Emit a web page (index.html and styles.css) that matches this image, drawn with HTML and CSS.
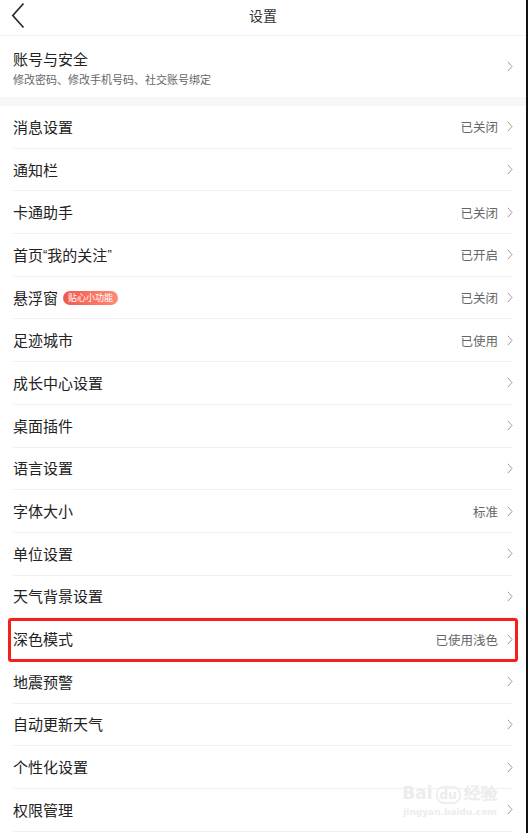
FILE: index.html
```html
<!DOCTYPE html>
<html lang="zh">
<head>
<meta charset="utf-8">
<link rel="stylesheet" href="styles.css">
</head>
<body>
<div class="screen">
  <header class="topbar">
    <svg class="back" width="14" height="27" viewBox="0 0 14 27"><path d="M12.5 1.5 L1.8 13.5 L12.5 25.5" fill="none" stroke="#2a2a2a" stroke-width="1.7"/></svg>
    <div class="title">设置</div>
  </header>
  <div class="account">
    <div class="acc-text">
      <div class="acc-title">账号与安全</div>
      <div class="acc-sub">修改密码、修改手机号码、社交账号绑定</div>
    </div>
    <svg class="chev" width="6" height="11" viewBox="0 0 6 11"><path d="M0.8 0.8 L5 5.5 L0.8 10.2" fill="none" stroke="#9a9a9a" stroke-width="1"/></svg>
  </div>
  <div class="gap"></div>
  <ul class="list">
    <li class="row"><span class="label">消息设置</span><span class="value">已关闭</span><svg class="chev" width="6" height="11" viewBox="0 0 6 11"><path d="M0.8 0.8 L5 5.5 L0.8 10.2" fill="none" stroke="#9a9a9a" stroke-width="1"/></svg></li>
    <li class="row"><span class="label">通知栏</span><span class="value"></span><svg class="chev" width="6" height="11" viewBox="0 0 6 11"><path d="M0.8 0.8 L5 5.5 L0.8 10.2" fill="none" stroke="#9a9a9a" stroke-width="1"/></svg></li>
    <li class="row"><span class="label">卡通助手</span><span class="value">已关闭</span><svg class="chev" width="6" height="11" viewBox="0 0 6 11"><path d="M0.8 0.8 L5 5.5 L0.8 10.2" fill="none" stroke="#9a9a9a" stroke-width="1"/></svg></li>
    <li class="row"><span class="label">首页<span class="q">“</span>我的关注<span class="q">”</span></span><span class="value">已开启</span><svg class="chev" width="6" height="11" viewBox="0 0 6 11"><path d="M0.8 0.8 L5 5.5 L0.8 10.2" fill="none" stroke="#9a9a9a" stroke-width="1"/></svg></li>
    <li class="row"><span class="label">悬浮窗<span class="badge">贴心小功能</span></span><span class="value">已关闭</span><svg class="chev" width="6" height="11" viewBox="0 0 6 11"><path d="M0.8 0.8 L5 5.5 L0.8 10.2" fill="none" stroke="#9a9a9a" stroke-width="1"/></svg></li>
    <li class="row"><span class="label">足迹城市</span><span class="value">已使用</span><svg class="chev" width="6" height="11" viewBox="0 0 6 11"><path d="M0.8 0.8 L5 5.5 L0.8 10.2" fill="none" stroke="#9a9a9a" stroke-width="1"/></svg></li>
    <li class="row"><span class="label">成长中心设置</span><span class="value"></span><svg class="chev" width="6" height="11" viewBox="0 0 6 11"><path d="M0.8 0.8 L5 5.5 L0.8 10.2" fill="none" stroke="#9a9a9a" stroke-width="1"/></svg></li>
    <li class="row"><span class="label">桌面插件</span><span class="value"></span><svg class="chev" width="6" height="11" viewBox="0 0 6 11"><path d="M0.8 0.8 L5 5.5 L0.8 10.2" fill="none" stroke="#9a9a9a" stroke-width="1"/></svg></li>
    <li class="row"><span class="label">语言设置</span><span class="value"></span><svg class="chev" width="6" height="11" viewBox="0 0 6 11"><path d="M0.8 0.8 L5 5.5 L0.8 10.2" fill="none" stroke="#9a9a9a" stroke-width="1"/></svg></li>
    <li class="row"><span class="label">字体大小</span><span class="value">标准</span><svg class="chev" width="6" height="11" viewBox="0 0 6 11"><path d="M0.8 0.8 L5 5.5 L0.8 10.2" fill="none" stroke="#9a9a9a" stroke-width="1"/></svg></li>
    <li class="row"><span class="label">单位设置</span><span class="value"></span><svg class="chev" width="6" height="11" viewBox="0 0 6 11"><path d="M0.8 0.8 L5 5.5 L0.8 10.2" fill="none" stroke="#9a9a9a" stroke-width="1"/></svg></li>
    <li class="row"><span class="label">天气背景设置</span><span class="value"></span><svg class="chev" width="6" height="11" viewBox="0 0 6 11"><path d="M0.8 0.8 L5 5.5 L0.8 10.2" fill="none" stroke="#9a9a9a" stroke-width="1"/></svg></li>
    <li class="row highlighted"><span class="label">深色模式</span><span class="value">已使用浅色</span><svg class="chev" width="6" height="11" viewBox="0 0 6 11"><path d="M0.8 0.8 L5 5.5 L0.8 10.2" fill="none" stroke="#9a9a9a" stroke-width="1"/></svg><span class="mark"></span></li>
    <li class="row"><span class="label">地震预警</span><span class="value"></span><svg class="chev" width="6" height="11" viewBox="0 0 6 11"><path d="M0.8 0.8 L5 5.5 L0.8 10.2" fill="none" stroke="#9a9a9a" stroke-width="1"/></svg></li>
    <li class="row"><span class="label">自动更新天气</span><span class="value"></span><svg class="chev" width="6" height="11" viewBox="0 0 6 11"><path d="M0.8 0.8 L5 5.5 L0.8 10.2" fill="none" stroke="#9a9a9a" stroke-width="1"/></svg></li>
    <li class="row"><span class="label">个性化设置</span><span class="value"></span><svg class="chev" width="6" height="11" viewBox="0 0 6 11"><path d="M0.8 0.8 L5 5.5 L0.8 10.2" fill="none" stroke="#9a9a9a" stroke-width="1"/></svg></li>
    <li class="row"><span class="label">权限管理</span><span class="value"></span><svg class="chev" width="6" height="11" viewBox="0 0 6 11"><path d="M0.8 0.8 L5 5.5 L0.8 10.2" fill="none" stroke="#9a9a9a" stroke-width="1"/></svg></li>
  </ul>
  <div class="watermark">
    <div class="wm-top">Bai<span class="wm-du">du</span>经验</div>
    <div class="wm-url">jingyan.baidu.com</div>
  </div>
</div>
</body>
</html>
```

FILE: styles.css
```css
* { box-sizing: border-box; }
html, body {
  margin: 0;
  padding: 0;
  background: #ffffff;
}
body {
  font-family: "Noto Sans CJK SC", "Noto Sans", sans-serif;
  color: #222222;
  width: 528px;
  height: 833px;
  overflow: hidden;
}
.screen {
  position: relative;
  width: 528px;
  height: 833px;
  border-right: 2px solid #111111;
  background: #ffffff;
}
.topbar {
  position: relative;
  height: 36px;
  border-bottom: 1px solid #f2f2f2;
  display: flex;
  align-items: center;
  justify-content: center;
}
.back {
  position: absolute;
  left: 11px;
  top: 2px;
}
.title {
  font-size: 14px;
  color: #333333;
  line-height: 20px;
  margin-top: -6px;
}
.account {
  height: 61px;
  display: flex;
  align-items: center;
  padding: 0 13px 0 13px;
}
.acc-text {
  flex: 1;
  display: flex;
  flex-direction: column;
}
.acc-title {
  font-size: 15px;
  line-height: 20px;
  color: #222222;
  margin-top: 2px;
}
.acc-sub {
  font-size: 11px;
  line-height: 16px;
  color: #666666;
  margin-top: 2px;
}
.gap {
  height: 9px;
  background: #f7f7f7;
}
.list {
  list-style: none;
  margin: 0;
  padding: 0 13px;
}
.row {
  position: relative;
  height: 42.7px;
  display: flex;
  align-items: center;
  border-bottom: 1px solid #f0f0f0;
}
.label {
  flex: 1;
  font-size: 15px;
  line-height: 20px;
  color: #222222;
  display: flex;
  align-items: center;
}
.q {
  font-family: "Liberation Sans", sans-serif;
  font-size: 13px;
}
.value {
  font-size: 12.5px;
  color: #666666;
  margin-right: 9px;
}
.chev {
  display: block;
  flex: none;
}
.badge {
  margin-left: 5px;
  height: 14px;
  padding: 0 5px;
  border-radius: 7px;
  background: linear-gradient(90deg, #f2594a, #ff8a74);
  color: #ffffff;
  font-size: 9px;
  line-height: 14px;
}
.mark {
  position: absolute;
  left: -5px;
  right: -5px;
  top: 0px;
  bottom: -2px;
  border: 3px solid #f5201c;
  border-radius: 3px;
  pointer-events: none;
}
.watermark {
  position: absolute;
  left: 402px;
  top: 783px;
  width: 96px;
  color: #ececec;
  font-family: "DejaVu Sans", sans-serif;
  text-align: center;
}
.wm-top {
  font-size: 17px;
  line-height: 20px;
  font-weight: bold;
}
.wm-du {
  font-size: 12px;
  border: 2px solid #efefef;
  border-radius: 8px;
  padding: 0 2px;
  margin: 0 3px;
}
.wm-url {
  font-size: 9px;
  line-height: 14px;
  font-weight: bold;
}
```
